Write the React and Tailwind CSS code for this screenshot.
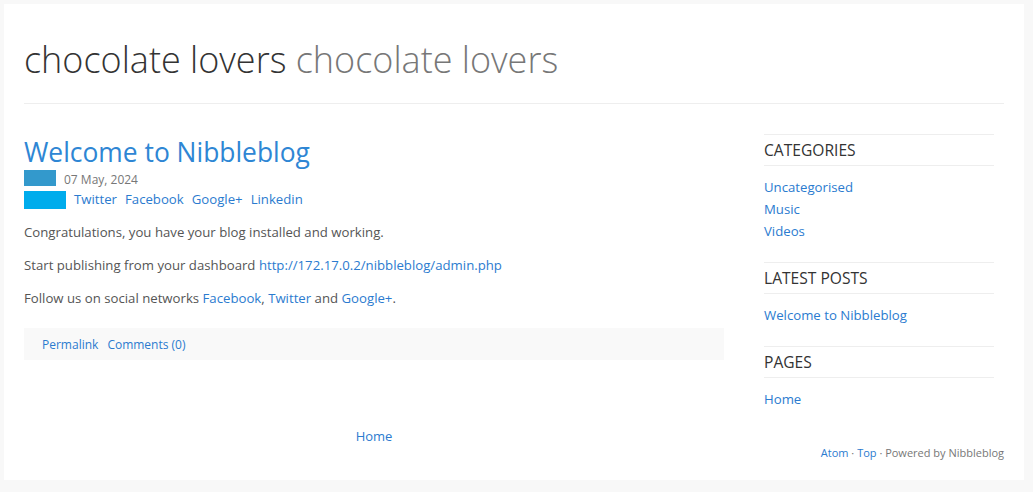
const categories = ["Uncategorised", "Music", "Videos"];

function SideBlock({ title, links }) {
  return (
    <div className="mb-5">
      <h3 className="border-y border-[#eeeeee] text-[15.6px] leading-[30px] text-[#333] font-normal">{title}</h3>
      <ul className="mt-[10px]">
        {links.map((l) => (
          <li key={l} className="text-[13.2px] leading-[22px]">
            <a className="text-[#2b7bcf]" href="#">{l}</a>
          </li>
        ))}
      </ul>
    </div>
  );
}

export default function App() {
  return (
    <div className="min-h-screen bg-[#f8f8f8] p-1 font-['Open_Sans',sans-serif]">
      <div className="bg-white w-[1020px] h-[476px] px-5">
        {/* Header */}
        <header className="h-[100px] pt-[32px] border-b border-[#eeeeee]">
          <h1 className="text-[36px] leading-[48px] font-light">
            <span className="text-[#333]">chocolate lovers</span>{" "}
            <span className="text-[#777]">chocolate lovers</span>
          </h1>
        </header>

        <div className="flex pt-[30px]">
          {/* Main column */}
          <main className="w-[700px]">
            <h2 className="text-[26.4px] leading-[36px] text-[#2e86d4] font-normal">Welcome to Nibbleblog</h2>
            <div className="flex items-center h-4 gap-2">
              <span className="w-8 h-4 bg-[#3399cc]" />
              <span className="text-[12px] text-[#777] pt-[3px]">07 May, 2024</span>
            </div>
            <div className="flex items-center h-[18px] mt-[5px] gap-2 text-[13.2px]">
              <span className="w-[42px] h-[18px] bg-[#00acec]" />
              <a className="text-[#2b7bcf]" href="#">Twitter</a>
              <a className="text-[#2b7bcf]" href="#">Facebook</a>
              <a className="text-[#2b7bcf]" href="#">Google+</a>
              <a className="text-[#2b7bcf]" href="#">Linkedin</a>
            </div>

            <div className="mt-[13px] text-[13.2px] leading-[20px] text-[#555] space-y-[13px]">
              <p>Congratulations, you have your blog installed and working.</p>
              <p>
                Start publishing from your dashboard{" "}
                <a className="text-[#2b7bcf]" href="#">http://172.17.0.2/nibbleblog/admin.php</a>
              </p>
              <p>
                Follow us on social networks <a className="text-[#2b7bcf]" href="#">Facebook</a>,{" "}
                <a className="text-[#2b7bcf]" href="#">Twitter</a> and{" "}
                <a className="text-[#2b7bcf]" href="#">Google+</a>.
              </p>
            </div>

            <div className="mt-5 h-8 bg-[#f9f9f9] flex items-center pl-[18px] gap-[9px] text-[12px] pt-px">
              <a className="text-[#2b7bcf]" href="#">Permalink</a>
              <a className="text-[#2b7bcf]" href="#">Comments (0)</a>
            </div>

            <div className="mt-[66px] text-center text-[13px] leading-[20px]">
              <a className="text-[#2b7bcf]" href="#">Home</a>
            </div>
          </main>

          {/* Sidebar */}
          <aside className="w-[230px] ml-10">
            <SideBlock title="CATEGORIES" links={categories} />
            <SideBlock title="LATEST POSTS" links={["Welcome to Nibbleblog"]} />
            <SideBlock title="PAGES" links={["Home"]} />
          </aside>
        </div>

        <footer className="text-right text-[11px] leading-4 text-[#777] -mt-px">
          <a className="text-[#2b7bcf]" href="#">Atom</a> · <a className="text-[#2b7bcf]" href="#">Top</a> · Powered by Nibbleblog
        </footer>
      </div>
    </div>
  );
}
